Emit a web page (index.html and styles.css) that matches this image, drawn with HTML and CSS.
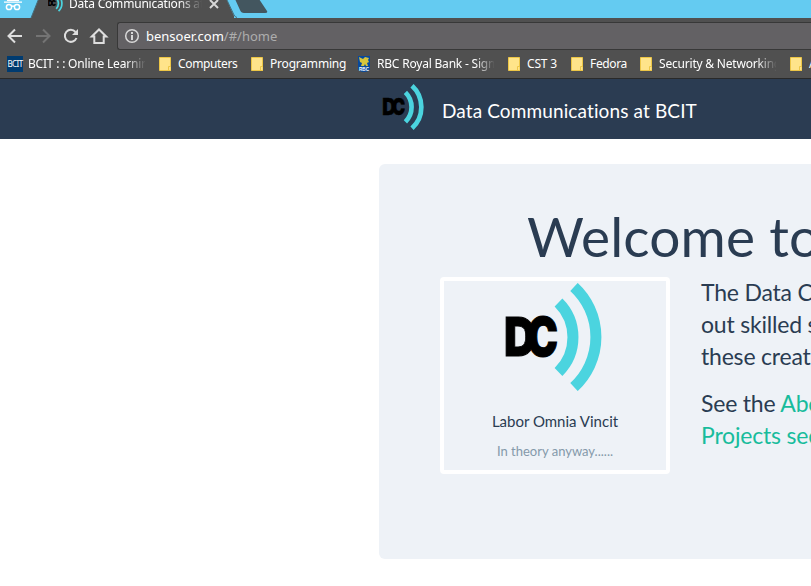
FILE: index.html
```html
<!DOCTYPE html>
<html lang="en">
<head>
<meta charset="utf-8">
<title>Data Communications at BCIT</title>
<link rel="stylesheet" href="styles.css">
</head>
<body>
<svg class="defs" aria-hidden="true">
  <symbol id="logo" viewBox="0 0 98 108">
    <text class="logo-letters" x="-1" y="73" textLength="32" lengthAdjust="spacingAndGlyphs">D</text>
    <text class="logo-letters" x="22" y="73" textLength="31" lengthAdjust="spacingAndGlyphs">C</text>
    <g fill="none" stroke="#4bd4df" stroke-width="11">
      <path d="M53.500 19.500A49 49 0 0 1 53.500 89"/>
      <path d="M69 4A68 68 0 0 1 69 104"/>
    </g>
  </symbol>
  <symbol id="folder" viewBox="0 0 12 14">
    <path d="M.5.5h11V9l.5 1v3.500H.5z" fill="#ffe48a" stroke="#edc646"/>
    <path d="M9.500 13V9.500H12" fill="none" stroke="#edc646"/>
  </symbol>
</svg>
<header class="browser">
  <div class="tabstrip">
    <svg width="280" height="18" viewBox="0 0 280 18">
      <path d="M31 18L39-2H226l8 18v2z" fill="#505050"/>
      <path d="M31 18L39-2M226-2l8 17q1 2 3 2.500" fill="none" stroke="#466b79"/>
      <path d="M235-1h24l8 12q1 2-2 2h-21q-3 0-4-3z" fill="#43565f"/>
      <path d="M7 0h12v1H7zM4 1.500h18v1.300H4z" fill="#fff"/>
      <g fill="none" stroke="#fff" stroke-width="1.500"><circle cx="9" cy="7" r="2.600"/><circle cx="17" cy="7" r="2.600"/><path d="M11.600 6.500q1.400-1 2.800 0"/></g>
      <path d="M210 0l8 8M218 0l-8 8" stroke="#d7d7d7" stroke-width="2"/>
      <use href="#logo" x="48" y="-5" width="15" height="17"/>
    </svg>
    <span class="tab-title">Data Communications at BCIT</span>
  </div>
  <div class="toolbar">
    <svg width="110" height="32" viewBox="0 0 110 32" fill="none" stroke="#dedede" stroke-width="2">
      <path d="M22 18H9M15 11.500L8.500 18l6.500 6.500"/>
      <path d="M36 18h13M43 11.500l6.500 6.500-6.500 6.500" stroke="#747474"/>
      <path d="M75.500 14A6 6 0 1 0 76.500 20"/><path d="M78 11v6h-6z" fill="#dedede" stroke="none"/>
      <path d="M91.800 18.500l7.200-7 7.200 7h-2.500V25h-9.400v-6.500z"/>
    </svg>
    <div class="address">
      <svg width="16" height="16" viewBox="0 0 16 16"><circle cx="8" cy="8" r="6.300" fill="none" stroke="#d8d8d8" stroke-width="1.500"/><path d="M7 7h2v5H7zM7 4h2v2H7z" fill="#d8d8d8"/></svg>
      <span class="url">bensoer.com<span>/#/home</span></span>
    </div>
  </div>
  <nav class="bookmarks">
    <a><i class="bcit">BCIT</i><span class="fade bm-online">BCIT : : Online Learning</span></a>
    <a><svg><use href="#folder"/></svg><span>Computers</span></a>
    <a><svg><use href="#folder"/></svg><span class="bm-wide">Programming</span></a>
    <a><svg class="rbc" viewBox="0 0 12 16"><path d="M0 0h12v13q-1 3-6 3t-6-3z" fill="#07499d"/><path d="M1 1l4 2 2-2 4 1-1 2 1 2-2 1 1 3H8L7 8 6 10H3l1-3-2-1z" fill="#d8c53c"/><text x="1" y="14.500" textLength="10" lengthAdjust="spacingAndGlyphs">RBC</text></svg><span class="fade">RBC Royal Bank - Sign In</span></a>
    <a><svg><use href="#folder"/></svg><span class="bm-wide">CST 3</span></a>
    <a><svg><use href="#folder"/></svg><span>Fedora</span></a>
    <a><svg><use href="#folder"/></svg><span class="fade">Security &amp; Networking</span></a>
    <a><svg><use href="#folder"/></svg><span>A</span></a>
  </nav>
</header>
<div class="navbar">
  <svg class="brand-logo"><use href="#logo"/></svg>
  <span class="brand">Data Communications at BCIT</span>
</div>
<main class="jumbotron">
  <h1>Welcome to</h1>
  <div class="columns">
    <section class="card">
      <svg class="card-logo"><use href="#logo"/></svg>
      <p class="motto">Labor Omnia Vincit</p>
      <p class="note">In theory anyway......</p>
    </section>
    <section class="copy">
      <p>The Data Communications<br>out skilled students<br>these creations</p>
      <p>See the <a>About and<br>Projects sections</a></p>
    </section>
  </div>
</main>
</body>
</html>
```
FILE: styles.css
```css
* { box-sizing: border-box; }
body {
  margin: 0;
  width: 811px;
  height: 586px;
  overflow: hidden;
  background: #fff;
  color: #2a3c52;
  font-family: Lato, sans-serif;
  font-variant-ligatures: none;
}
.defs { position: absolute; width: 0; height: 0; }
svg { display: block; flex: none; }
.logo-letters { font: 900 54px Inter, sans-serif; fill: #000; stroke: #000; stroke-width: 1px; }
.browser {
  height: 79px;
  background: #505050;
  border-bottom: 1px solid #292929;
  color: #fff;
  font-family: "Noto Sans", sans-serif;
  font-size: 12px;
}
.tabstrip { height: 18px; display: flex; background: #64cbf1; overflow: hidden; }
.tab-title {
  width: 133px;
  height: 18px;
  margin: -5px 0 0 -211px;
  line-height: 18px;
  letter-spacing: -.2px;
  white-space: nowrap;
  overflow: hidden;
  -webkit-mask-image: linear-gradient(90deg, #000 110px, transparent 133px);
  mask-image: linear-gradient(90deg, #000 110px, transparent 133px);
}
.toolbar { height: 32px; display: flex; }
.address {
  display: flex;
  align-items: center;
  flex: 1;
  height: 28px;
  margin: 4px 0 0 7px;
  padding-left: 6px;
  border: 1px solid #383838;
  border-right: 0;
  border-radius: 3px 0 0 3px;
  background: #636164;
}
.url { margin-left: 6px; font-size: 13px; letter-spacing: 0; }
.url span { color: #adadad; }
.bookmarks {
  display: grid;
  grid-template-columns: 152px 92px 107px 150px 63px 69px 150px 21px;
  height: 28px;
  padding-left: 7px;
  align-items: center;
  overflow: hidden;
}
.bookmarks a { display: flex; align-items: center; white-space: nowrap; height: 18px; margin-top: -1px; }
.bookmarks svg { width: 12px; height: 14px; }
.bookmarks .rbc { height: 16px; }
.rbc text { font: bold 5px "Liberation Sans", sans-serif; fill: #fff; }
.bookmarks span { margin-left: 7px; letter-spacing: -.35px; }
.bookmarks .bm-wide { letter-spacing: -.2px; }
.bookmarks .fade {
  width: 117px;
  letter-spacing: -.2px;
  overflow: hidden;
  -webkit-mask-image: linear-gradient(90deg, #000 98px, transparent 118px);
  mask-image: linear-gradient(90deg, #000 98px, transparent 118px);
}
.bcit {
  width: 16px;
  height: 16px;
  background: #003b70;
  font: 8px/16px "Noto Sans", sans-serif;
  letter-spacing: -.6px;
  text-align: center;
}
.bookmarks .bm-online { margin-left: 5px; }
.navbar { height: 60px; display: flex; background: #2b3c52; }
.brand-logo { width: 43px; height: 46px; margin: 5px 0 0 382px; }
.brand { margin: 18px 0 0 17px; font-size: 19px; line-height: 27px; color: #fff; letter-spacing: .12px; }
.jumbotron {
  width: 432px;
  height: 395px;
  margin: 25px 0 0 379px;
  padding: 42px 0 0 61px;
  border-radius: 6px 0 0 6px;
  background: #eef2f7;
  overflow: hidden;
}
h1 { margin: 0 0 11px 87px; font-size: 55px; line-height: 60px; font-weight: 400; letter-spacing: .15px; white-space: nowrap; }
.columns { display: flex; }
.card {
  flex: none;
  width: 230px;
  height: 197px;
  border: 4px solid #fff;
  border-radius: 4px;
  text-align: center;
}
.card-logo { width: 98px; height: 108px; margin: 2px 0 0 61px; }
.card p { margin: 0; }
.card .motto { margin-top: 20px; font-size: 15px; line-height: 21px; }
.card .note { margin-top: 10px; font-size: 13px; line-height: 19px; color: #8499aa; }
.copy { margin: -1px 0 0 31px; white-space: nowrap; }
.copy p { margin: 0 0 15px; font-size: 23px; line-height: 32px; letter-spacing: -.2px; }
.copy a { color: #18bc9c; }
```
